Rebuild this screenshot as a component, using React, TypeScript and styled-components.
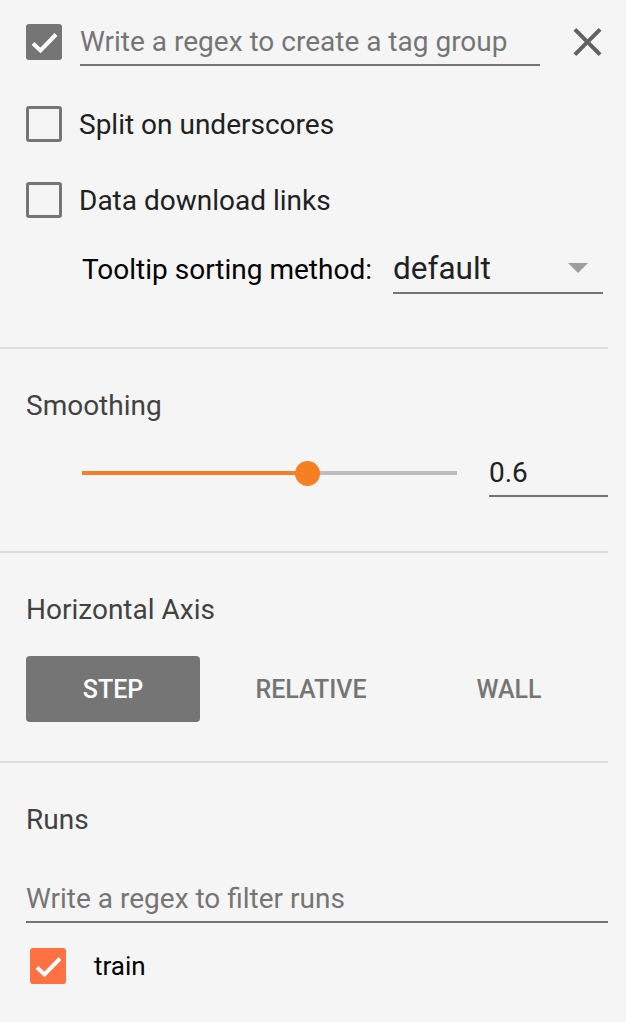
import React from "react"
import styled, { createGlobalStyle } from "styled-components"

const GlobalStyle = createGlobalStyle`
  html, body {
    margin: 0;
    padding: 0;
    background: #f5f5f5;
  }
  body {
    font-family: Roboto, "Noto Sans", "Liberation Sans", sans-serif;
    color: #212121;
  }
  * {
    box-sizing: border-box;
  }
`

const Panel = styled.div`
  width: 608px;
  min-height: 1022px;
  background: #f5f5f5;
`

const Section = styled.div<{ $top: number; $bottom: number }>`
  padding: ${(p) => p.$top}px 0 ${(p) => p.$bottom}px 26px;
  display: flex;
  flex-direction: column;
`

const Divider = styled.div`
  height: 2px;
  background: #dcdcdc;
`

const Row = styled.div<{ $mt: number }>`
  display: flex;
  align-items: center;
  height: 36px;
  margin-top: ${(p) => p.$mt}px;
`

const Box = styled.div<{ $checked?: boolean; $color?: string }>`
  width: 36px;
  height: 36px;
  flex-shrink: 0;
  border-radius: 3px;
  display: flex;
  align-items: center;
  justify-content: center;
  background: ${(p) => (p.$checked ? p.$color || "#757575" : "transparent")};
  border: ${(p) => (p.$checked ? "none" : "3px solid #757575")};
`

const CheckLabel = styled.span`
  margin-left: 17px;
  font-size: 28px;
  color: #212121;
`

const TagField = styled.div`
  margin-left: 18px;
  width: 460px;
  height: 48px;
  border-bottom: 2px solid #757575;
  display: flex;
  align-items: center;
  font-size: 28px;
  color: #757575;
  flex-shrink: 0;
`

const CloseButton = styled.div`
  margin-left: 33px;
  width: 29px;
  height: 28px;
  display: flex;
`

const TooltipRow = styled.div`
  display: flex;
  align-items: center;
  margin-top: 26px;
  height: 50px;
  padding-left: 56px;
`

const TooltipLabel = styled.span`
  font-size: 28px;
  color: #000;
`

const Dropdown = styled.div`
  margin-left: auto;
  margin-right: 5px;
  width: 210px;
  height: 50px;
  border-bottom: 2px solid #757575;
  display: flex;
  align-items: center;
  justify-content: space-between;
  padding-right: 15px;
  font-size: 31.5px;
  color: #212121;
`

const Caret = styled.div`
  width: 0;
  height: 0;
  border-left: 10px solid transparent;
  border-right: 10px solid transparent;
  border-top: 10px solid #9e9e9e;
`

const Heading = styled.div`
  font-size: 28px;
  line-height: 32px;
  color: #424242;
`

const SliderRow = styled.div`
  display: flex;
  align-items: center;
  height: 48px;
  margin-top: 27px;
  padding-left: 56px;
`

const Track = styled.div`
  position: relative;
  width: 375px;
  height: 4px;
  background: #bdbdbd;
  flex-shrink: 0;
`

const TrackFill = styled.div`
  position: absolute;
  left: 0;
  top: 0;
  height: 4px;
  background: #f57f22;
`

const Knob = styled.div`
  position: absolute;
  top: 50%;
  width: 25px;
  height: 25px;
  margin: -12.5px 0 0 -12.5px;
  border-radius: 50%;
  background: #f57f22;
`

const ValueField = styled.div`
  flex: 1;
  margin-left: 32px;
  height: 48px;
  border-bottom: 2px solid #757575;
  display: flex;
  align-items: center;
  font-size: 28px;
  color: #212121;
`

const ButtonGroup = styled.div`
  display: flex;
  gap: 24px;
  margin-top: 30px;
`

const AxisButton = styled.div<{ $active?: boolean }>`
  width: 174px;
  height: 66px;
  border-radius: 4px;
  display: flex;
  align-items: center;
  justify-content: center;
  font-size: 25px;
  font-weight: 500;
  background: ${(p) => (p.$active ? "#757575" : "transparent")};
  color: ${(p) => (p.$active ? "#fff" : "#757575")};
`

const FilterField = styled.div`
  margin-top: 39px;
  height: 48px;
  border-bottom: 2px solid #757575;
  display: flex;
  align-items: center;
  font-size: 28px;
  color: #757575;
`

const RunRow = styled.div`
  display: flex;
  align-items: center;
  height: 36px;
  margin-top: 25px;
  padding-left: 4px;
`

const RunLabel = styled.span`
  margin-left: 28px;
  font-size: 26px;
  color: #000;
`

function Check() {
  return (
    <svg width="36" height="36" viewBox="0 0 36 36">
      <polyline points="7,19.5 14.5,26.5 30,10.5" fill="none" stroke="#fff" strokeWidth="4" />
    </svg>
  )
}

const SMOOTHING = 0.6

export default function App() {
  return (
    <Panel>
      <GlobalStyle />
      <Section $top={0} $bottom={53}>
        <Row $mt={24}>
          <Box $checked>
            <Check />
          </Box>
          <TagField>Write a regex to create a tag group</TagField>
          <CloseButton>
            <svg width="29" height="28" viewBox="5 5 14 14">
              <path
                fill="#616161"
                d="M19 6.41L17.59 5 12 10.59 6.41 5 5 6.41 10.59 12 5 17.59 6.41 19 12 13.41 17.59 19 19 17.59 13.41 12z"
              />
            </svg>
          </CloseButton>
        </Row>
        <Row $mt={46}>
          <Box />
          <CheckLabel>Split on underscores</CheckLabel>
        </Row>
        <Row $mt={40}>
          <Box />
          <CheckLabel>Data download links</CheckLabel>
        </Row>
        <TooltipRow>
          <TooltipLabel>Tooltip sorting method:</TooltipLabel>
          <Dropdown>
            <span>default</span>
            <Caret />
          </Dropdown>
        </TooltipRow>
      </Section>
      <Divider />

      <Section $top={41} $bottom={54}>
        <Heading>Smoothing</Heading>
        <SliderRow>
          <Track>
            <TrackFill style={{ width: `${SMOOTHING * 100}%` }} />
            <Knob style={{ left: `${SMOOTHING * 100}%` }} />
          </Track>
          <ValueField>{SMOOTHING}</ValueField>
        </SliderRow>
      </Section>
      <Divider />

      <Section $top={41} $bottom={39}>
        <Heading>Horizontal Axis</Heading>
        <ButtonGroup>
          <AxisButton $active>STEP</AxisButton>
          <AxisButton>RELATIVE</AxisButton>
          <AxisButton>WALL</AxisButton>
        </ButtonGroup>
      </Section>
      <Divider />

      <Section $top={41} $bottom={30}>
        <Heading>Runs</Heading>
        <FilterField>Write a regex to filter runs</FilterField>
        <RunRow>
          <Box $checked $color="#ff7043">
            <Check />
          </Box>
          <RunLabel>train</RunLabel>
        </RunRow>
      </Section>
    </Panel>
  )
}
